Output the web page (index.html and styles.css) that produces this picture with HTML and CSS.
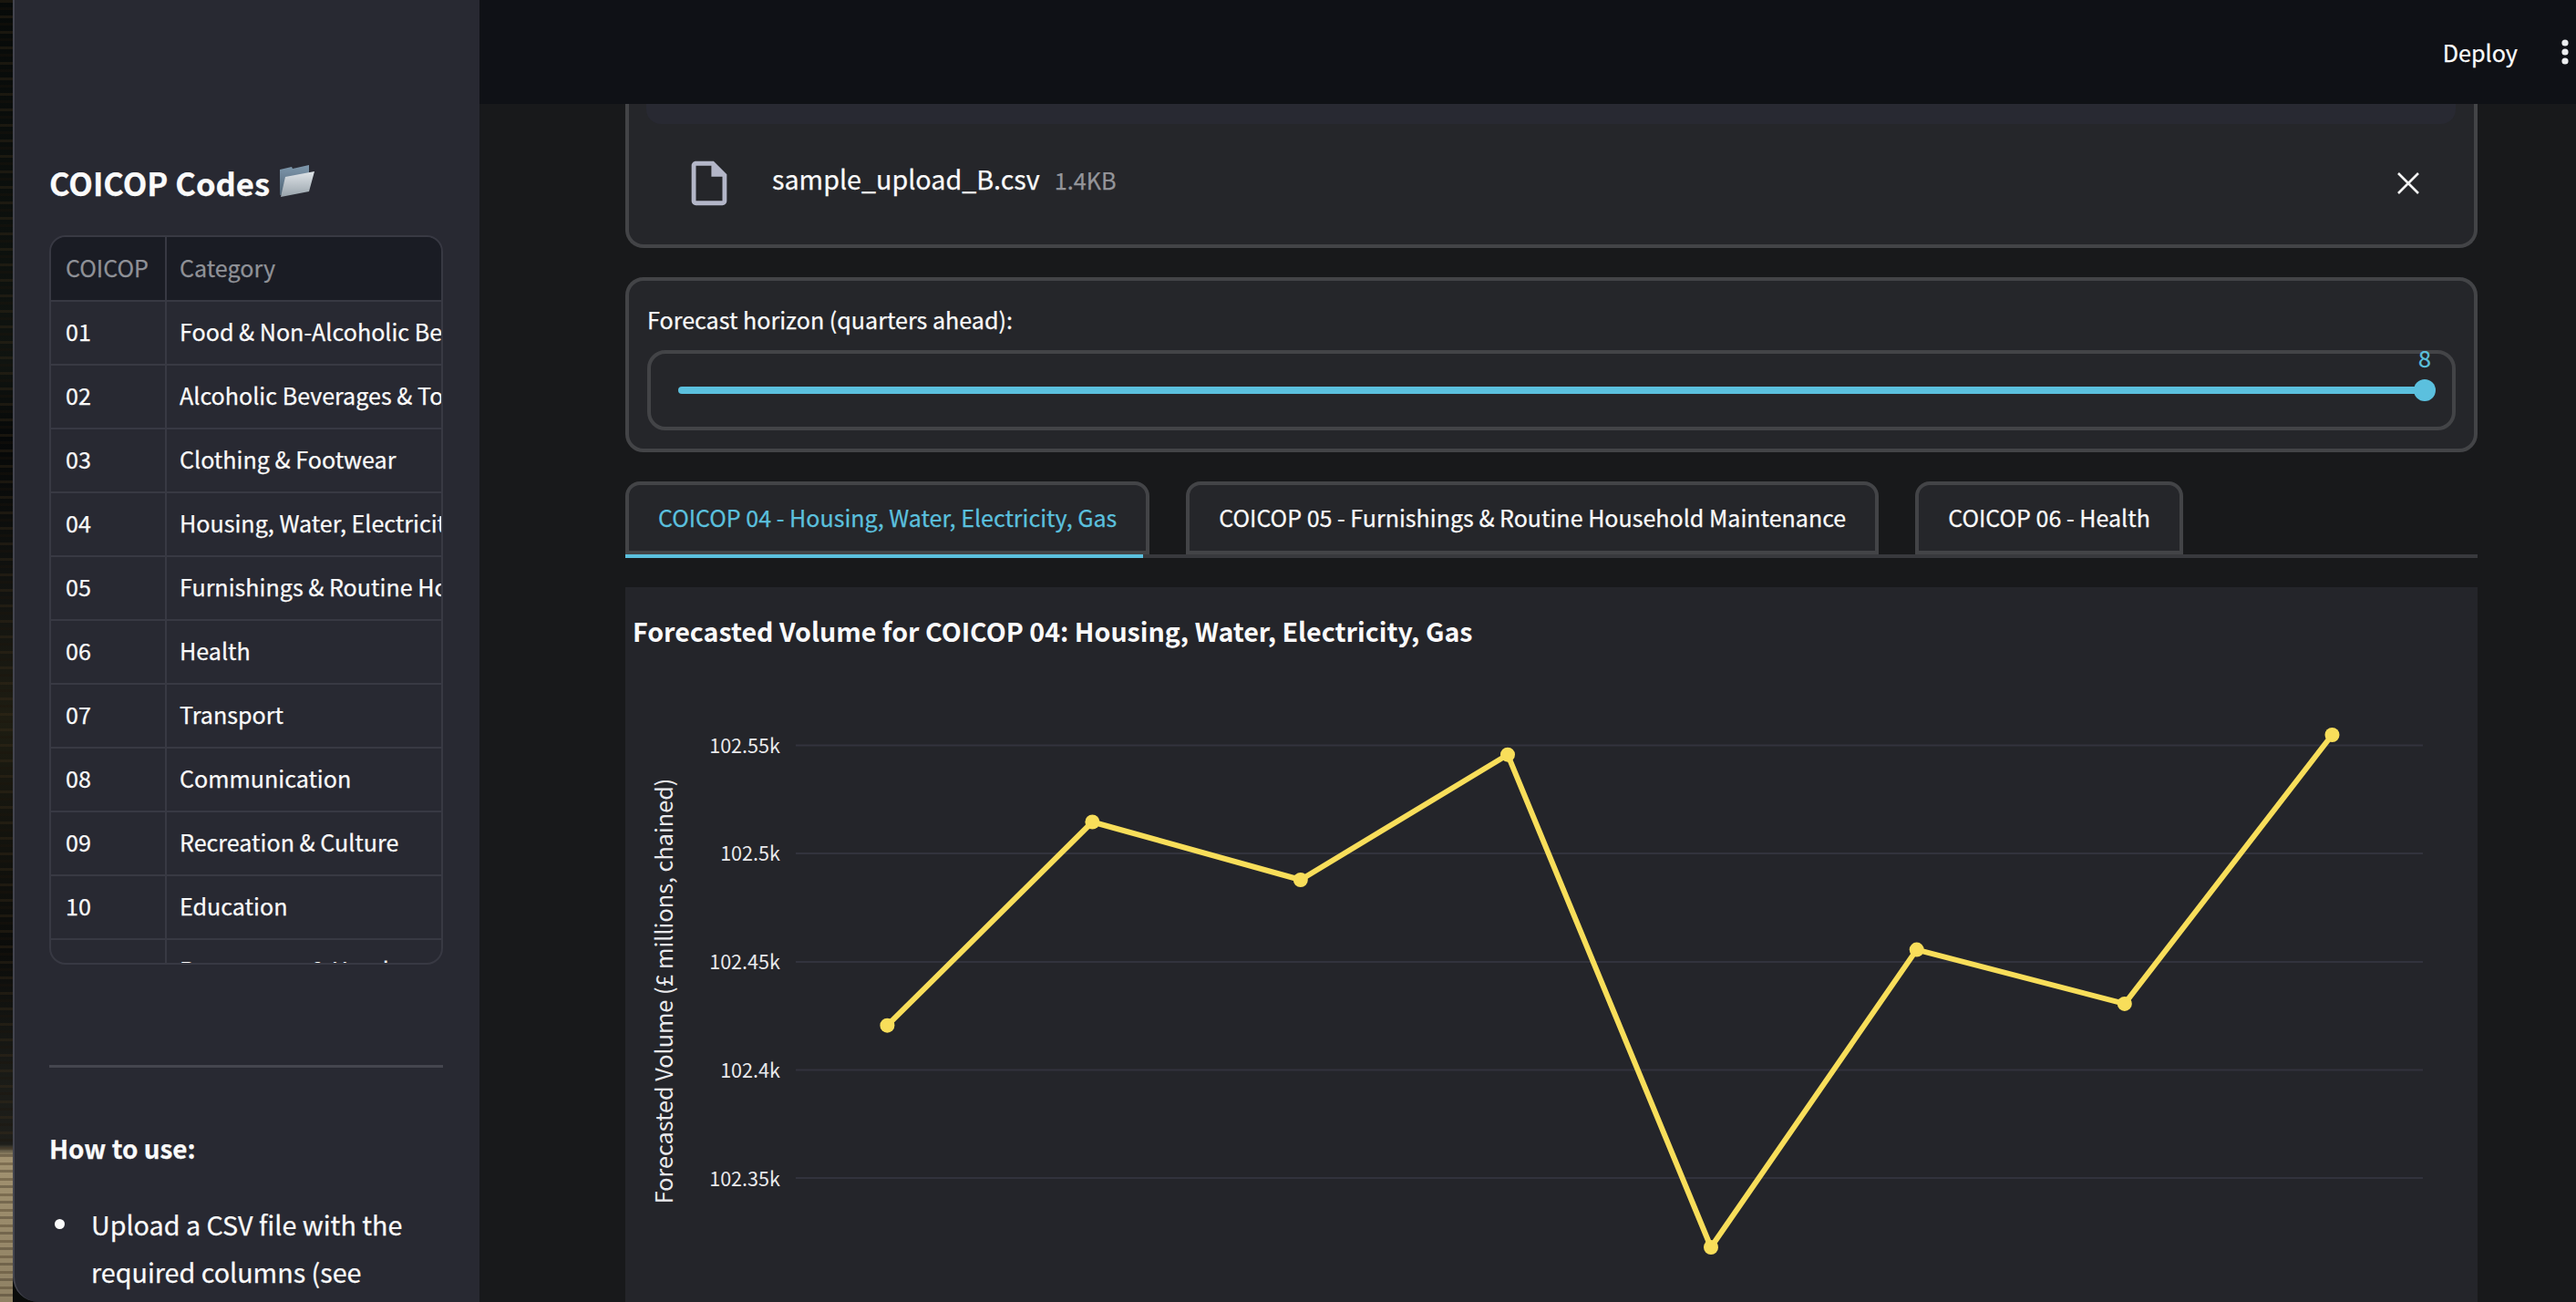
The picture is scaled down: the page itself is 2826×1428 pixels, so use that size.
FILE: index.html
```html
<!DOCTYPE html>
<html lang="en">
<head>
<meta charset="utf-8">
<title>COICOP Forecast</title>
<link rel="stylesheet" href="styles.css">
</head>
<body>
<div class="app">
  <aside class="sidebar">
    <h3 class="side-title">COICOP Codes
      <svg class="folder" viewBox="0 0 39 36" aria-hidden="true">
        <defs>
          <linearGradient id="fb" x1="0" y1="0" x2="0" y2="1"><stop offset="0" stop-color="#7f98ad"/><stop offset="1" stop-color="#4f6475"/></linearGradient>
          <linearGradient id="ff" x1="0" y1="0" x2="0" y2="1"><stop offset="0" stop-color="#dfe4e8"/><stop offset="1" stop-color="#98a3ab"/></linearGradient>
        </defs>
        <path d="M1 6 L14 3 L15 5 L33 1 L33 12 L6 33 L1 34 Z" fill="url(#fb)"/>
        <path d="M7 14 L39 8 L33 30 L2 36 Z" fill="url(#ff)"/>
      </svg>
    </h3>
    <div class="codes">
      <table class="codes-table">
        <thead><tr><th class="col-a">COICOP</th><th>Category</th></tr></thead>
        <tbody>
          <tr><td>01</td><td>Food &amp; Non-Alcoholic Beverages</td></tr>
          <tr><td>02</td><td>Alcoholic Beverages &amp; Tobacco</td></tr>
          <tr><td>03</td><td>Clothing &amp; Footwear</td></tr>
          <tr><td>04</td><td>Housing, Water, Electricity, Gas</td></tr>
          <tr><td>05</td><td>Furnishings &amp; Routine Household Maintenance</td></tr>
          <tr><td>06</td><td>Health</td></tr>
          <tr><td>07</td><td>Transport</td></tr>
          <tr><td>08</td><td>Communication</td></tr>
          <tr><td>09</td><td>Recreation &amp; Culture</td></tr>
          <tr><td>10</td><td>Education</td></tr>
          <tr><td>11</td><td>Restaurants &amp; Hotels</td></tr>
        </tbody>
      </table>
    </div>
    <hr class="rule">
    <p class="how">How to use:</p>
    <ul class="steps">
      <li>Upload a CSV file with the required columns (see</li>
    </ul>
  </aside>
  <main class="main">
    <header class="topbar">
      <span class="deploy">Deploy</span>
      <svg class="kebab" viewBox="0 0 8 28" aria-hidden="true"><circle cx="4" cy="4" r="3.6"/><circle cx="4" cy="14" r="3.6"/><circle cx="4" cy="24" r="3.6"/></svg>
    </header>
    <div class="content">
      <section class="card upload">
        <div class="dropzone"></div>
        <div class="file-row">
          <svg class="file-icon" viewBox="0 0 24 24" aria-hidden="true"><path d="M14 2H6c-1.1 0-2 .9-2 2v16c0 1.1.9 2 2 2h12c1.1 0 2-.9 2-2V8l-6-6zm4 18H6V4h7v5h5v11z"/></svg>
          <span class="file-name">sample_upload_B.csv</span>
          <span class="file-size">1.4KB</span>
          <svg class="close" viewBox="0 0 24 24" aria-hidden="true"><path d="M1 1 L23 23 M23 1 L1 23"/></svg>
        </div>
      </section>
      <section class="card horizon">
        <label class="horizon-label">Forecast horizon (quarters ahead):</label>
        <div class="slider">
          <div class="track">
            <span class="thumb"></span>
            <span class="value">8</span>
          </div>
        </div>
      </section>
      <nav class="tabs">
        <button class="tab active">COICOP 04 - Housing, Water, Electricity, Gas</button>
        <button class="tab">COICOP 05 - Furnishings &amp; Routine Household Maintenance</button>
        <button class="tab">COICOP 06 - Health</button>
      </nav>
      <section class="panel">
        <svg class="chart" viewBox="686 644 2032 784" aria-label="Forecast chart">
          <text class="chart-title" x="694" y="704">Forecasted Volume for COICOP 04: Housing, Water, Electricity, Gas</text>
          <g class="grid">
            <line x1="873" x2="2658" y1="817.5" y2="817.5"/>
            <line x1="873" x2="2658" y1="936" y2="936"/>
            <line x1="873" x2="2658" y1="1055" y2="1055"/>
            <line x1="873" x2="2658" y1="1173.5" y2="1173.5"/>
            <line x1="873" x2="2658" y1="1292" y2="1292"/>
          </g>
          <g class="ticks">
            <text x="856" y="826">102.55k</text>
            <text x="856" y="944">102.5k</text>
            <text x="856" y="1063">102.45k</text>
            <text x="856" y="1182">102.4k</text>
            <text x="856" y="1301">102.35k</text>
          </g>
          <text class="axis-title" transform="translate(738 1087) rotate(-90)">Forecasted Volume (£ millions, chained)</text>
          <polyline class="series" points="973.4,1124.7 1198.4,901.5 1426.8,965 1654,827.7 1877,1368 2102.7,1041.6 2330.8,1100.9 2558.5,806"/>
          <g class="dots">
            <circle cx="973.4" cy="1124.7" r="8"/>
            <circle cx="1198.4" cy="901.5" r="8"/>
            <circle cx="1426.8" cy="965" r="8"/>
            <circle cx="1654" cy="827.7" r="8"/>
            <circle cx="1877" cy="1368" r="8"/>
            <circle cx="2102.7" cy="1041.6" r="8"/>
            <circle cx="2330.8" cy="1100.9" r="8"/>
            <circle cx="2558.5" cy="806" r="8"/>
          </g>
        </svg>
      </section>
    </div>
  </main>
</div>
</body>
</html>
```

FILE: styles.css
```css
* { box-sizing: border-box; }
html, body { margin: 0; height: 100%; }
body {
  width: 2826px;
  height: 1428px;
  overflow: hidden;
  color: #fafafa;
  font-family: "Noto Sans CJK JP", "Noto Sans", sans-serif;
  -webkit-text-stroke: 0.25px currentColor;
  background-color: #0a0c0b;
  background-image:
    repeating-linear-gradient(180deg, rgba(60,45,25,.35) 0 3px, rgba(0,0,0,0) 3px 8px, rgba(30,20,10,.3) 8px 11px, rgba(0,0,0,0) 11px 17px),
    linear-gradient(180deg, #070a09 0, #0c100d 240px, #101410 400px, #060808 480px, #121310 650px, #1e1d12 790px, #14140e 900px, #0b0c0a 1040px, #1a1b17 1180px, #1e1e1a 1255px, #a29270 1268px, #8f8164 1428px);
  background-size: 14px 1428px, 14px 1428px;
  background-repeat: no-repeat;
}

.app { display: flex; height: 1428px; padding-left: 14px; }

.sidebar {
  width: 512px;
  flex: none;
  height: 1428px;
  padding: 172px 40px 0 38px;
  overflow: hidden;
  background: #282932;
  border-left: 2px solid #43444e;
  border-bottom-left-radius: 28px;
}
.side-title {
  display: flex;
  align-items: center;
  margin: 0 0 30px;
  height: 56px;
  font-size: 34.6px;
  line-height: 56px;
  font-weight: 600;
  white-space: nowrap;
}
.folder { width: 39px; height: 36px; margin: -4px 0 0 10px; }

.codes {
  width: 432px;
  height: 800px;
  overflow: hidden;
  border: 2px solid #383943;
  border-radius: 18px;
}
.codes-table {
  width: 430px;
  table-layout: fixed;
  border-collapse: collapse;
  font-size: 25.1px;
}
.codes-table th, .codes-table td {
  height: 70px;
  padding: 0 0 4px 16px;
  text-align: left;
  font-weight: 400;
  white-space: nowrap;
  overflow: hidden;
  border-bottom: 2px solid #383943;
  border-right: 2px solid #383943;
}
.codes-table th:last-child, .codes-table td:last-child { border-right: 0; padding-left: 14px; }
.codes-table th { color: #8f9197; background: #1a1c24; height: 70px; }
.col-a { width: 126px; }

.rule { margin: 110px 0 0; height: 3px; border: 0; background: #45464f; width: 432px; }
.how { margin: 63px 0 0; font-size: 27.9px; line-height: 51px; font-weight: 600; }
.steps { margin: 32px 0 0; padding: 0 0 0 46px; font-size: 28.7px; line-height: 51.6px; list-style: none; }
.steps li { position: relative; }
.steps li::before {
  content: "";
  position: absolute;
  left: -40px;
  top: 20px;
  width: 11px;
  height: 11px;
  border-radius: 50%;
  background: #fafafa;
}

.main { flex: 1; min-width: 0; display: flex; flex-direction: column; height: 1428px; background: #18191b; }
.topbar {
  flex: none;
  height: 114px;
  display: flex;
  align-items: center;
  justify-content: flex-end;
  background: #0f1116;
  padding-right: 8px;
}
.deploy { font-size: 25.2px; line-height: 40px; }
.kebab { width: 8px; height: 28px; margin-left: 48px; fill: #eceef0; }

.content {
  flex: 1;
  min-height: 0;
  overflow: hidden;
  display: flex;
  flex-direction: column;
  gap: 32px;
  padding: 0 108px 0 160px;
}
.card { flex: none; background: #25262a; border: 4px solid #434447; border-radius: 20px; }
.upload {
  height: 158px;
  border-top: 0;
  border-radius: 0 0 20px 20px;
  display: flex;
  flex-direction: column;
}
.dropzone { flex: none; height: 22px; margin: 0 20px 0 19px; background: #282932; border-radius: 0 0 16px 16px; }
.file-row { display: flex; align-items: center; flex: 1; padding: 0 60px 8px 59px; }
.file-icon { width: 58px; height: 58px; flex: none; fill: #b3b6c8; margin-top: 6px; }
.file-name { margin-left: 40px; font-size: 28.7px; line-height: 44px; margin-bottom: 4px; }
.file-size { margin-left: 16px; font-size: 25.2px; line-height: 44px; color: #94959a; margin-bottom: 2px; }
.close { width: 24px; height: 24px; margin-left: auto; stroke: #f4f4f4; stroke-width: 2.6; fill: none; margin-top: 6px; }

.horizon { height: 192px; padding: 22px 20px 20px; display: flex; flex-direction: column; gap: 14px; }
.horizon-label { font-size: 25.1px; line-height: 40px; }
.slider {
  height: 88px;
  padding: 0 30px;
  display: flex;
  align-items: center;
  border: 4px solid #434447;
  border-radius: 20px;
}
.track { position: relative; flex: 1; height: 8px; border-radius: 4px; background: #5bc0de; }
.thumb { position: absolute; right: -12px; top: -8px; width: 24px; height: 24px; border-radius: 50%; background: #5bc0de; }
.value { position: absolute; right: -12px; width: 24px; top: -50px; text-align: center; font-size: 25.2px; line-height: 36px; color: #5bc0de; }

.tabs { flex: none; position: relative; display: flex; gap: 40px; height: 84px; border-bottom: 4px solid #38393d; }
.tab {
  height: 80px;
  padding: 0 32px 3px;
  font: inherit;
  font-size: 25.05px;
  color: #fafafa;
  white-space: nowrap;
  background: #25262a;
  border: 4px solid #434447;
  border-radius: 16px 16px 0 0;
}
.tab.active { color: #5bc0de; position: relative; }
.tab.active::after {
  content: "";
  position: absolute;
  left: -4px;
  right: 3px;
  bottom: -8px;
  height: 4px;
  background: #5bc0de;
}

.panel { flex: 1; min-height: 0; background: #24252a; }
.chart { display: block; width: 2032px; height: 784px; font-family: "Noto Sans CJK JP", "Noto Sans", sans-serif; }
.chart-title { font-size: 28.6px; font-weight: 700; fill: #fafafa; }
.grid line { stroke: #32333d; stroke-width: 2; }
.ticks text { font-size: 21.6px; text-anchor: end; fill: #e9e9ec; }
.axis-title { font-size: 25.2px; text-anchor: middle; fill: #e9e9ec; }
.series { fill: none; stroke: #f8de5a; stroke-width: 6; stroke-linejoin: round; }
.dots circle { fill: #f8de5a; }
```
